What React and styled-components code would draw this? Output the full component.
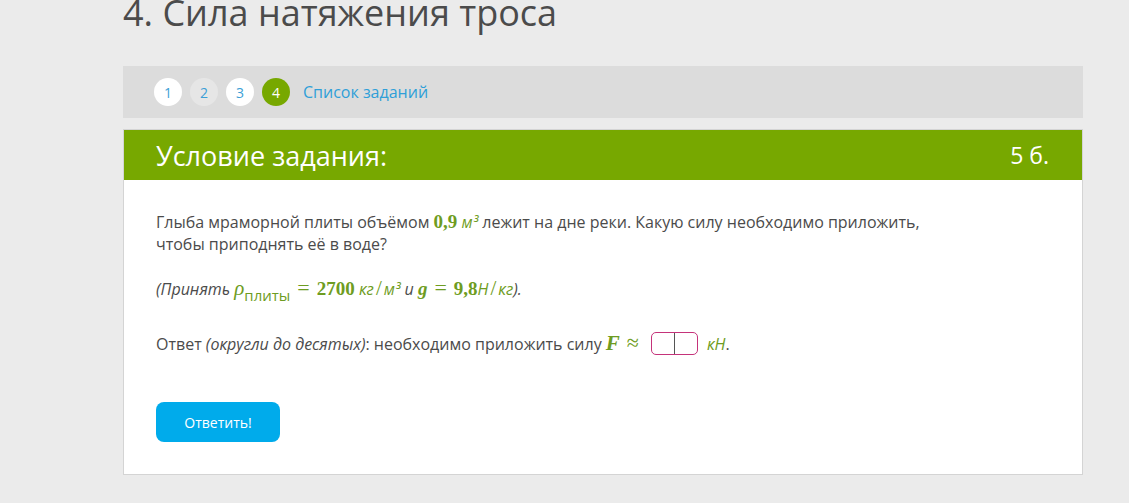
import * as React from 'react';
import styled, { createGlobalStyle } from 'styled-components';

const GlobalStyle = createGlobalStyle`
  html, body {
    margin: 0;
    padding: 0;
    background: #ebebeb;
    font-family: "Open Sans", "DejaVu Sans", sans-serif;
    overflow: hidden;
  }
`;

const Page = styled.div`
  width: 960px;
  padding-left: 123px;
  height: 503px;
`;

const Heading = styled.h1`
  margin: -9px 0 0 0;
  font-size: 36px;
  line-height: 43px;
  font-weight: 400;
  color: #4b4b4b;
`;

const Nav = styled.div`
  margin-top: 32px;
  height: 52px;
  background: #dcdcdc;
  display: flex;
  align-items: center;
  padding-left: 31px;
  gap: 8px;
`;

const Step = styled.div`
  width: 28px;
  height: 28px;
  border-radius: 50%;
  background: ${({ $active, $muted }) => ($active ? '#77a800' : $muted ? '#e6e6e6' : '#ffffff')};
  color: ${({ $active }) => ($active ? '#ffffff' : '#3c9fd6')};
  font-size: 14px;
  display: flex;
  align-items: center;
  justify-content: center;
`;

const TaskList = styled.a`
  margin-left: 5px;
  font-size: 16px;
  color: #2f9fd8;
  text-decoration: none;
`;

const Card = styled.div`
  margin-top: 11px;
  background: #ffffff;
  border: 1px solid #d4d4d4;
`;

const CardHeader = styled.div`
  height: 50px;
  background: #77a800;
  color: #ffffff;
  display: flex;
  align-items: center;
  justify-content: space-between;
  padding: 0 33px 0 32px;
  font-size: 27px;
`;

const Points = styled.span`
  font-size: 23px;
`;

const CardBody = styled.div`
  padding: 31px 32px 32px 32px;
  color: #4b4b4b;
  font-size: 16px;
  line-height: 22px;
`;

const Para = styled.p`
  margin: 0 0 ${({ $gap }) => $gap || 22}px 0;
  max-width: 780px;
`;

const M = styled.span`
  font-family: "Liberation Serif", "DejaVu Serif", serif;
  font-weight: ${({ $light }) => ($light ? 400 : 700)};
  font-style: ${({ $italic }) => ($italic ? 'italic' : 'normal')};
  color: #6e9c22;
  font-size: ${({ $size }) => $size || 19}px;
  line-height: 0;
`;

const Op = styled(M)`
  margin: 0 7px;
`;

const Slash = styled(M)`
  margin: 0 2px;
`;

const Unit = styled.span`
  font-style: italic;
  color: #6e9c22;
  font-size: 16px;
`;

const Sub = styled.sub`
  font-family: "Open Sans", sans-serif;
  font-weight: 400;
  font-style: normal;
  font-size: 15px;
  vertical-align: -6px;
  line-height: 0;
`;

const Italic = styled.i`
  font-style: italic;
`;

const AnswerBox = styled.span`
  display: inline-flex;
  vertical-align: middle;
  width: 47px;
  height: 23px;
  border: 1px solid #c5337a;
  border-radius: 5px;
  margin: -4px 9px 0 5px;
  box-sizing: border-box;
`;

const Cell = styled.span`
  flex: 1;
  & + & {
    border-left: 1px solid #555;
  }
`;

const Button = styled.button`
  margin-top: 25px;
  width: 124px;
  height: 40px;
  border: none;
  border-radius: 8px;
  background: #00abeb;
  color: #ffffff;
  font-family: "Open Sans", sans-serif;
  font-size: 14px;
`;

export default function App() {
  return (
    <Page>
      <GlobalStyle />
      <Heading>4. Сила натяжения троса</Heading>
      <Nav>
        <Step>1</Step>
        <Step $muted>2</Step>
        <Step>3</Step>
        <Step $active>4</Step>
        <TaskList href="#">Список заданий</TaskList>
      </Nav>
      <Card>
        <CardHeader>
          <span>Условие задания:</span>
          <Points>5 б.</Points>
        </CardHeader>
        <CardBody>
          <Para $gap={23}>
            Глыба мраморной плиты объёмом <M>0,9</M> <Unit>м³</Unit> лежит на дне реки. Какую силу необходимо
            приложить, чтобы приподнять её в воде?
          </Para>
          <Para $gap={33}>
            <Italic>(Принять </Italic>
            <M $italic $light $size={21}>ρ<Sub>плиты</Sub></M>
            <Op $light $size={22}>=</Op>
            <M>2700</M> <Unit>кг</Unit><Slash $light $size={21}>/</Slash><Unit>м³</Unit> <Italic>и</Italic>{' '}
            <M $italic>g</M>
            <Op $light $size={22}>=</Op>
            <M>9,8</M><Unit>Н</Unit><Slash $light $size={21}>/</Slash><Unit>кг</Unit>
            <Italic>).</Italic>
          </Para>
          <Para $gap={0}>
            Ответ <Italic>(округли до десятых)</Italic>: необходимо приложить силу <M $italic $size={21}>F</M>
            <Op $light $size={22}>≈</Op>
            <AnswerBox>
              <Cell />
              <Cell />
            </AnswerBox>
            <Unit>кН</Unit>.
          </Para>
          <Button>Ответить!</Button>
        </CardBody>
      </Card>
    </Page>
  );
}
